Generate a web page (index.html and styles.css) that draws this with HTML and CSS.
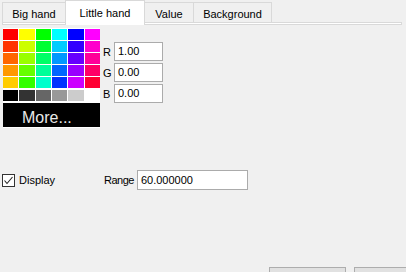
FILE: index.html
```html
<!DOCTYPE html>
<html>
<head>
<meta charset="utf-8">
<link rel="stylesheet" href="styles.css">
</head>
<body>
<div class="tabs">
  <div class="tab t-big">Big hand</div>
  <div class="tab t-little sel">Little hand</div>
  <div class="tab t-value">Value</div>
  <div class="tab t-bg">Background</div>
</div>
<div class="pane-line"></div>
<div class="color-row">
  <div class="palette">
    <div class="grid">
      <i style="background:#FF0000"></i><i style="background:#FFFF00"></i><i style="background:#00FF00"></i><i style="background:#00FFFF"></i><i style="background:#0000FF"></i><i style="background:#FF00FF"></i>
      <i style="background:#FF3300"></i><i style="background:#CCFF00"></i><i style="background:#00FF33"></i><i style="background:#00CCFF"></i><i style="background:#3300FF"></i><i style="background:#FF00CC"></i>
      <i style="background:#FF6600"></i><i style="background:#99FF00"></i><i style="background:#00FF66"></i><i style="background:#0099FF"></i><i style="background:#6600FF"></i><i style="background:#FF0099"></i>
      <i style="background:#FF9900"></i><i style="background:#66FF00"></i><i style="background:#00FF99"></i><i style="background:#0066FF"></i><i style="background:#9900FF"></i><i style="background:#FF0066"></i>
      <i style="background:#FFCC00"></i><i style="background:#33FF00"></i><i style="background:#00FFCC"></i><i style="background:#0033FF"></i><i style="background:#CC00FF"></i><i style="background:#FF0033"></i>
    </div>
    <div class="grid grays">
      <i style="background:#000000"></i><i style="background:#333333"></i><i style="background:#666666"></i><i style="background:#999999"></i><i style="background:#CCCCCC"></i><i style="background:#FFFFFF"></i>
    </div>
    <div class="more">More...</div>
  </div>
  <div class="rgb">
    <div class="rgb-line"><span class="lbl">R</span><div class="field small">1.00</div></div>
    <div class="rgb-line"><span class="lbl">G</span><div class="field small">0.00</div></div>
    <div class="rgb-line"><span class="lbl">B</span><div class="field small">0.00</div></div>
  </div>
</div>
<div class="opts">
  <div class="check-wrap">
    <span class="checkbox"><svg width="11" height="11" viewBox="0 0 11 11"><path d="M1.5 5.5 L4 8.5 L9.5 2" fill="none" stroke="#222" stroke-width="1.1"/></svg></span>
    <span class="check-lbl">Display</span>
  </div>
  <span class="range-lbl">Range</span>
  <div class="field range">60.000000</div>
</div>
<div class="buttons">
  <div class="btn"></div>
  <div class="btn"></div>
</div>
</body>
</html>
```
FILE: styles.css
```css
html, body {
  margin: 0;
  padding: 0;
  background: #F0F0F0;
  overflow: hidden;
  width: 406px;
  height: 272px;
}
body {
  font-family: "Liberation Sans", Arial, sans-serif;
  font-size: 11px;
  color: #000;
}
.tabs {
  display: flex;
  align-items: flex-end;
  height: 22px;
  padding-left: 2px;
  position: relative;
  z-index: 1;
}
.tab {
  box-sizing: border-box;
  height: 20px;
  border: 1px solid #D9D9D9;
  border-bottom: none;
  background: #F0F0F0;
  padding-top: 3px;
  line-height: 16px;
  text-align: center;
  margin-left: -1px;
}
.t-big { width: 64px; margin-left: 0; }
.t-little { width: 80px; }
.t-value { width: 50px; }
.t-bg { width: 79px; }
.tab.sel {
  background: #FFFFFF;
  height: 25px;
  padding-top: 4px;
  margin-bottom: -3px;
  position: relative;
  z-index: 2;
}
.pane-line {
  box-sizing: border-box;
  height: 3px;
  margin: 0 4px 0 2px;
  border: 1px solid #D9D9D9;
  background: #FFFFFF;
}
.color-row {
  display: flex;
  align-items: flex-start;
  margin-top: 3px;
  padding-left: 3px;
}
.palette {
  width: 97px;
  background: #FFFFFF;
  padding: 1px 0 1px 0;
}
.grid {
  display: grid;
  grid-template-columns: repeat(6, 1fr);
  grid-auto-rows: 11px;
  gap: 1px;
}
.grid i { display: block; }
.grays { margin-top: 2px; }
.more {
  box-sizing: border-box;
  margin-top: 2px;
  height: 24px;
  background: #000;
  color: #E8E8E8;
  font-size: 16px;
  line-height: 16px;
  padding: 7px 0 0 19px;
}
.rgb {
  display: flex;
  flex-direction: column;
  gap: 2px;
  margin-top: 14px;
  margin-left: 3px;
}
.rgb-line {
  display: flex;
  align-items: center;
}
.lbl {
  width: 11px;
  line-height: 14px;
}
.field {
  box-sizing: border-box;
  background: #FFFFFF;
  border: 1px solid #ABABAB;
  padding-left: 3px;
}
.field.small {
  width: 49px;
  height: 19px;
  line-height: 17px;
}
.opts {
  display: flex;
  align-items: center;
  margin-top: 42px;
  padding-left: 2px;
}
.check-wrap {
  display: flex;
  align-items: center;
  width: 102px;
}
.checkbox {
  box-sizing: border-box;
  width: 13px;
  height: 13px;
  border: 1px solid #333;
  background: #FFFFFF;
  display: flex;
}
.checkbox svg { display: block; }
.check-lbl { margin-left: 4px; }
.range-lbl { margin-right: 3px; letter-spacing: -0.5px; }
.field.range {
  width: 111px;
  height: 20px;
  line-height: 18px;
}
.buttons {
  display: flex;
  gap: 8px;
  margin-top: 77px;
  padding-left: 269px;
  height: 5px;
  overflow: hidden;
}
.btn {
  box-sizing: border-box;
  flex: none;
  width: 77px;
  height: 23px;
  background: #E1E1E1;
  border: 1px solid #ADADAD;
}
.btn + .btn { width: 52px; border-right: none; }
```
